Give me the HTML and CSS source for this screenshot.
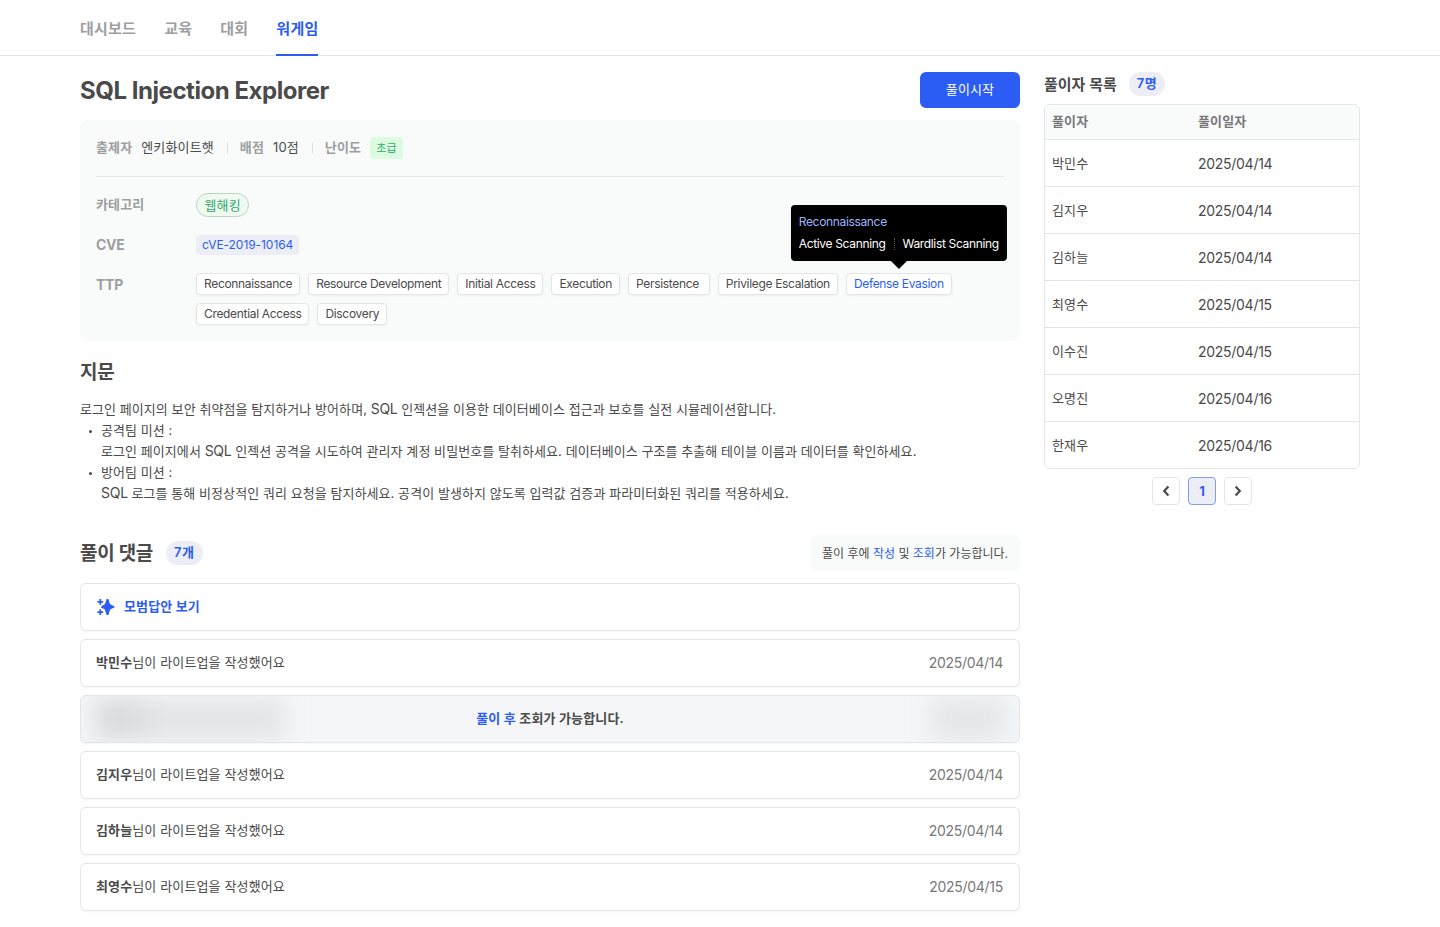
FILE: index.html
```html
<!DOCTYPE html>
<html lang="ko">

<head>
    <meta charset="UTF-8">
    <meta name="viewport" content="width=device-width, initial-scale=1.0">
    <title>SQL Injection Explorer</title>
    <link rel="stylesheet" href="styles.css">
</head>

<body>

    <header>
        <nav>
            <a href="#">대시보드</a>
            <a href="#">교육</a>
            <a href="#">대회</a>
            <a href="#" class="active">워게임</a>
        </nav>
    </header>

    <div class="container">
        <main>
            <div class="title-row">
                <h1>SQL Injection Explorer</h1>
                <button class="start-btn">풀이시작</button>
            </div>

            <section class="info">
                <div class="meta">
                    <span class="label">출제자</span>
                    <span class="value">엔키화이트햇</span>
                    <span class="bar"></span>
                    <span class="label">배점</span>
                    <span class="value">10점</span>
                    <span class="bar"></span>
                    <span class="label">난이도</span>
                    <span class="level">초급</span>
                </div>
                <div class="info-row">
                    <span class="label">카테고리</span>
                    <span class="category">웹해킹</span>
                </div>
                <div class="info-row">
                    <span class="label en">CVE</span>
                    <span class="cve">cVE-2019-10164</span>
                </div>
                <div class="info-row ttp">
                    <span class="label en">TTP</span>
                    <div class="tags">
                        <span class="tag">Reconnaissance</span>
                        <span class="tag">Resource Development</span>
                        <span class="tag">Initial Access</span>
                        <span class="tag">Execution</span>
                        <span class="tag wide">Persistence</span>
                        <span class="tag">Privilege Escalation</span>
                        <span class="tag selected">Defense Evasion
                            <span class="tooltip">
                                <span class="tooltip-title">Reconnaissance</span>
                                <span class="tooltip-list"><span>Active Scanning</span><i></i><span>Wardlist Scanning</span></span>
                            </span>
                        </span>
                        <span class="tag">Credential Access</span>
                        <span class="tag">Discovery</span>
                    </div>
                </div>
            </section>

            <section class="passage">
                <h2>지문</h2>
                <p>로그인 페이지의 보안 취약점을 탐지하거나 방어하며, <span class="en">SQL</span> 인젝션을 이용한 데이터베이스 접근과 보호를 실전 시뮬레이션합니다.</p>
                <ul>
                    <li>공격팀 미션 :<br>로그인 페이지에서 <span class="en">SQL</span> 인젝션 공격을 시도하여 관리자 계정 비밀번호를 탈취하세요. 데이터베이스 구조를 추출해 테이블 이름과 데이터를 확인하세요.</li>
                    <li>방어팀 미션 :<br><span class="en">SQL</span> 로그를 통해 비정상적인 쿼리 요청을 탐지하세요. 공격이 발생하지 않도록 입력값 검증과 파라미터화된 쿼리를 적용하세요.</li>
                </ul>
            </section>

            <section class="comments">
                <div class="comments-head">
                    <h2>풀이 댓글</h2>
                    <span class="count">7개</span>
                    <div class="notice">풀이 후에 <b>작성</b> 및 <b>조회</b>가 가능합니다.</div>
                </div>
                <div class="comment answer">
                    <svg width="20" height="20" viewBox="0 0 20 20" fill="currentColor">
                        <path d="M10.6 1.9h1.8L13.8 6.4Q14.1 7.3 15 7.7L18.4 9.2V10.6L15 12.1Q14.1 12.5 13.8 13.4L12.4 17.9H10.6L9.2 13.4Q8.9 12.5 8 12.1L5.2 10.6V9.2L8 7.7Q8.9 7.3 9.2 6.4Z" />
                        <path d="M3.4 2h1.8v2h2v1.8h-2v2H3.4v-2h-2V4h2zM3.4 12.2h1.8v2h2V16h-2v2H3.4v-2h-2v-1.8h2z" />
                    </svg>
                    <span class="text">모범답안 보기</span>
                </div>
                <div class="comment">
                    <span class="text"><strong>박민수</strong>님이 라이트업을 작성했어요</span>
                    <time>2025/04/14</time>
                </div>
                <div class="comment locked">
                    <span class="smudge left"></span>
                    <span class="text"><b>풀이 후</b> 조회가 가능합니다.</span>
                    <span class="smudge right"></span>
                </div>
                <div class="comment">
                    <span class="text"><strong>김지우</strong>님이 라이트업을 작성했어요</span>
                    <time>2025/04/14</time>
                </div>
                <div class="comment">
                    <span class="text"><strong>김하늘</strong>님이 라이트업을 작성했어요</span>
                    <time>2025/04/14</time>
                </div>
                <div class="comment">
                    <span class="text"><strong>최영수</strong>님이 라이트업을 작성했어요</span>
                    <time>2025/04/15</time>
                </div>
            </section>
        </main>

        <aside>
            <div class="aside-head">
                <h3>풀이자 목록</h3>
                <span class="count">7명</span>
            </div>
            <div class="table">
                <div class="tr th"><span>풀이자</span><span>풀이일자</span></div>
                <div class="tr"><span>박민수</span><time>2025/04/14</time></div>
                <div class="tr"><span>김지우</span><time>2025/04/14</time></div>
                <div class="tr"><span>김하늘</span><time>2025/04/14</time></div>
                <div class="tr"><span>최영수</span><time>2025/04/15</time></div>
                <div class="tr"><span>이수진</span><time>2025/04/15</time></div>
                <div class="tr"><span>오명진</span><time>2025/04/16</time></div>
                <div class="tr"><span>한재우</span><time>2025/04/16</time></div>
            </div>
            <div class="pagination">
                <button><svg width="12" height="12" viewBox="0 0 12 12"><path d="M8.4 1.4L4.2 6L8.4 10.6" /></svg></button>
                <button class="current">1</button>
                <button><svg width="12" height="12" viewBox="0 0 12 12"><path d="M3.6 1.4L7.8 6L3.6 10.6" /></svg></button>
            </div>
        </aside>
    </div>

</body>

</html>
```

FILE: styles.css
```css
* {
    box-sizing: border-box;
    margin: 0;
    padding: 0;
}

body {
    font-family: Inter, "Noto Sans CJK KR", sans-serif;
    font-size: 13px;
    line-height: 21px;
    letter-spacing: 0.01em;
    color: #4a4a4a;
    background-color: #fff;
}

h1,
h2,
h3 {
    font-weight: 600;
}

.en,
time {
    font-size: 14px;
    letter-spacing: -0.02em;
}

header {
    height: 56px;
    padding: 0 80px;
    border-bottom: 1px solid #e4e5e9;
}

nav {
    display: flex;
    gap: 28px;
    height: 56px;
}

nav a {
    height: 56px;
    line-height: 58px;
    font-size: 15px;
    font-weight: 600;
    letter-spacing: 0.016em;
    color: #9d9ea1;
    text-decoration: none;
}

nav a.active {
    color: #2b5df5;
    border-bottom: 2px solid #2b5df5;
}

.container {
    display: grid;
    grid-template-columns: 940px 316px;
    gap: 24px;
    padding: 16px 80px;
}

.title-row {
    display: flex;
    justify-content: space-between;
    align-items: center;
    height: 36px;
    margin-bottom: 12px;
}

h1 {
    font-size: 24px;
    font-weight: 700;
    letter-spacing: -0.019em;
}

.start-btn {
    width: 100px;
    height: 36px;
    padding-bottom: 2px;
    border: none;
    border-radius: 6px;
    background-color: #2b5df5;
    color: #fff;
    font: inherit;
    letter-spacing: inherit;
}

/* challenge info */
.info {
    height: 221px;
    padding: 0 16px;
    border-radius: 8px;
    background-color: #f9fbfa;
}

.meta {
    display: flex;
    align-items: center;
    height: 57px;
    margin-bottom: 8px;
    border-bottom: 1px solid #e4e5e9;
}

.label {
    padding-bottom: 2px;
    font-weight: 600;
    color: #9d9ea1;
}

.label.en {
    font-weight: 700;
}

.meta .label {
    margin-right: 9px;
}

.meta .value {
    padding-bottom: 1px;
}

.bar {
    width: 1px;
    height: 12px;
    margin: 0 12px 0 13px;
    background-color: #e0e1e5;
}

.level {
    height: 22px;
    padding: 0 6px;
    border-radius: 4px;
    background-color: #dcfce2;
    color: #32a96b;
    font-size: 11px;
    line-height: 22px;
}

.info-row {
    display: flex;
    align-items: center;
    height: 40px;
}

.info-row .label {
    width: 100px;
}

.category {
    height: 24px;
    padding: 0 7.5px;
    border: 1px solid #bcd6c5;
    border-radius: 12px;
    background-color: #effaf1;
    color: #32a96b;
    line-height: 22px;
}

.cve {
    height: 20px;
    padding: 0 6px;
    border-radius: 4px;
    background-color: #edeef5;
    color: #2b5df5;
    font-size: 12px;
    letter-spacing: -0.005em;
    line-height: 20px;
}

.info-row.ttp {
    align-items: flex-start;
    height: auto;
    padding-top: 8px;
}

.ttp .label {
    flex-shrink: 0;
    line-height: 24px;
}

.tags {
    display: flex;
    flex-wrap: wrap;
    gap: 8px;
}

.tag {
    position: relative;
    height: 22px;
    padding: 0 7px;
    border: 1px solid #e4e5e9;
    border-radius: 4px;
    background-color: #fff;
    box-shadow: 0 1px 2px rgba(30, 30, 80, 0.05);
    font-size: 12px;
    letter-spacing: -0.0273em;
    line-height: 20px;
}

.tag.wide {
    padding-right: 10px;
}

.tag.selected {
    color: #2b5df5;
}

.tooltip {
    position: absolute;
    left: 50%;
    bottom: 33px;
    transform: translateX(-50%);
    height: 56px;
    padding: 6px 8px;
    border-radius: 4px;
    background-color: #000;
    color: #fff;
    letter-spacing: -0.028em;
    line-height: 22px;
    white-space: nowrap;
}

.tooltip::after {
    content: "";
    position: absolute;
    left: 50%;
    top: 56px;
    margin-left: -8px;
    border: 8px solid transparent;
    border-top-color: #000;
    border-bottom: none;
}

.tooltip-title {
    display: block;
    color: #9db3fa;
}

.tooltip-list {
    display: flex;
    align-items: center;
}

.tooltip i {
    height: 12px;
    margin: 0 8px;
    border-left: 1px dotted #555;
}

/* passage */
h2 {
    padding-top: 2px;
    font-size: 19px;
    line-height: 30px;
    letter-spacing: -0.018em;
}

.passage {
    padding-top: 15px;
    height: 194px;
    letter-spacing: 0.005em;
}

.passage h2 {
    margin-bottom: 11px;
}

.passage .en {
    line-height: 1;
}

.passage ul {
    list-style: none;
    padding-left: 21px;
}

.passage li {
    position: relative;
}

.passage li::before {
    content: "";
    position: absolute;
    left: -12px;
    top: 10px;
    width: 3px;
    height: 3px;
    border-radius: 50%;
    background-color: #4a4a4a;
}

/* comments */
.comments {
    display: flex;
    flex-direction: column;
    gap: 8px;
}

.comments-head {
    display: flex;
    align-items: center;
    height: 36px;
    margin-bottom: 4px;
}

.count {
    height: 24px;
    margin-left: 12px;
    padding: 0 8px;
    border-radius: 12px;
    background-color: #edeef5;
    color: #2b5df5;
    font-weight: 600;
    letter-spacing: 0.04em;
    line-height: 23px;
}

.comments-head .count {
    margin-left: 13px;
}

.notice {
    height: 36px;
    margin-left: auto;
    padding: 0 12px;
    border-radius: 6px;
    background-color: #f9fbfa;
    font-size: 12px;
    letter-spacing: 0;
    line-height: 37px;
}

.notice b {
    color: #2b5df5;
    font-weight: 400;
}

.comment {
    display: flex;
    justify-content: space-between;
    align-items: center;
    height: 48px;
    padding: 0 16px 0 15px;
    border: 1px solid #e4e5e9;
    border-radius: 6px;
    box-shadow: 0 1px 2px rgba(0, 0, 0, 0.04);
}

.comment .text {
    padding-bottom: 2px;
}

.comment strong {
    font-weight: 600;
}

.comment time {
    padding-bottom: 1px;
    color: #77787b;
}

.answer {
    justify-content: flex-start;
    gap: 8px;
    color: #2b5df5;
    font-weight: 600;
}

.locked {
    overflow: hidden;
    padding: 0 14px;
    background-color: #f4f6f8;
    font-weight: 600;
}

.locked b {
    color: #2b5df5;
    font-weight: 600;
}

.smudge {
    display: flex;
    width: 190px;
    height: 42px;
    filter: blur(11px);
}

.smudge.left {
    background: linear-gradient(90deg, #dadbdc 0 40px, #e4e5e8 60px);
}

.smudge.right::after {
    content: "";
    width: 74px;
    margin-left: auto;
    background-color: #e5e6ea;
}

/* solver list */
.aside-head {
    display: flex;
    align-items: center;
    height: 24px;
    margin-bottom: 8px;
}

h3 {
    font-size: 15px;
    letter-spacing: 0;
}

.table {
    border: 1px solid #e4e5e9;
    border-radius: 6px;
    overflow: hidden;
}

.tr {
    display: grid;
    grid-template-columns: 146px 1fr;
    align-items: center;
    height: 47px;
    padding: 0 7px;
    border-bottom: 1px solid #e4e5e9;
}

.tr:last-child {
    height: 46px;
    border-bottom: none;
}

.tr.th {
    height: 35px;
    padding-bottom: 2px;
    background-color: #f9fbfa;
    color: #77787b;
    font-weight: 600;
}

.pagination {
    display: flex;
    justify-content: center;
    gap: 8px;
    margin-top: 8px;
}

.pagination button {
    display: flex;
    justify-content: center;
    align-items: center;
    width: 28px;
    height: 28px;
    border: 1px solid #e4e5e9;
    border-radius: 4px;
    background-color: #fff;
    font: inherit;
    font-weight: 700;
}

.pagination svg {
    fill: none;
    stroke: #4a4a4a;
    stroke-width: 2.2;
}

.pagination .current {
    border-color: #7f9df5;
    background-color: #edeef5;
    color: #2b5df5;
}
```
